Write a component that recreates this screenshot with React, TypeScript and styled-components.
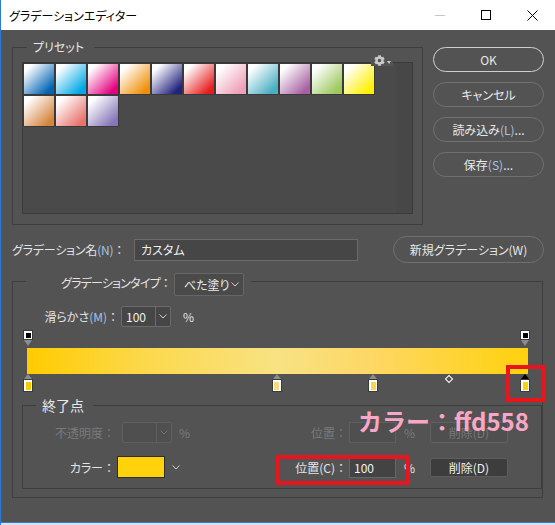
import React from "react";
import styled, { createGlobalStyle } from "styled-components";
import { FaCog } from "react-icons/fa";

const Global = createGlobalStyle`
  html, body { margin: 0; padding: 0; background: #535353; }
  * { box-sizing: border-box; }
`;

const Window = styled.div`
  position: relative;
  width: 555px;
  height: 525px;
  overflow: hidden;
  border-left: 1px solid #2d7ad6;
  display: flex;
  flex-direction: column;
  font-family: "Noto Sans CJK JP", "Noto Sans", sans-serif;
  font-feature-settings: "palt";
  font-size: 12px;
  color: #e4e4e4;
`;

const TitleBar = styled.div`
  height: 30px;
  flex: none;
  background: #ffffff;
  display: flex;
  align-items: center;
  padding-left: 8px;
  color: #000;
  font-size: 12px;
`;

const TitleText = styled.div`
  flex: 1;
`;

const WinButton = styled.div`
  width: 46px;
  height: 30px;
  display: flex;
  align-items: center;
  justify-content: center;
`;

const Body = styled.div`
  flex: 1;
  background: #535353;
  padding: 10px 11px 0 11px;
  display: flex;
  flex-direction: column;
`;

const BottomEdge = styled.div`
  height: 3px;
  flex: none;
  border-top: 1px solid #2d7ad6;
  background: #dde3ea;
`;

const TopRow = styled.div`
  display: flex;
  align-items: flex-start;
  gap: 10px;
`;

const Group = styled.fieldset<{ $w?: number; $pad: string; $mr?: number; $ml?: number; $mt?: number }>`
  position: relative;
  margin: ${(p) => p.$mt ?? 0}px ${(p) => p.$mr ?? 0}px 0 ${(p) => p.$ml ?? 0}px;
  padding: ${(p) => p.$pad};
  border: 1px solid #3e3e3e;
  min-width: 0;
  ${(p) => (p.$w ? `width: ${p.$w}px;` : "")}
`;

const Legend = styled.legend<{ $ml: number; $pl: number; $pr: number; $fs?: number }>`
  margin-left: ${(p) => p.$ml}px;
  padding: 0 ${(p) => p.$pr}px 0 ${(p) => p.$pl}px;
  font-size: ${(p) => p.$fs ?? 12}px;
  line-height: ${(p) => (p.$fs ?? 12) + 2}px;
  color: #e8e8e8;
`;

const TypeLegend = styled.legend`
  margin-left: 13px;
  padding: 0 7px 0 35px;
  height: 17px;
  display: flex;
  align-items: flex-start;
  gap: 2px;
`;

const LegendLabel = styled.span`
  line-height: 20px;
  color: #e4e4e4;
  letter-spacing: -0.8px;
  white-space: nowrap;
`;

const Colon = styled.span`
  font-feature-settings: normal;
  letter-spacing: 0;
`;

const GearBox = styled.div`
  position: absolute;
  top: 1px;
  right: 29px;
  display: flex;
  align-items: flex-end;
  gap: 2px;
  padding: 0 2px 0 3px;
  background: #535353;
  color: #c9c9c9;
`;

const TinyTriangle = styled.div`
  width: 0;
  height: 0;
  border-left: 2.5px solid transparent;
  border-right: 2.5px solid transparent;
  border-top: 3px solid #c9c9c9;
  margin-bottom: 2px;
`;

const PresetPanel = styled.div`
  height: 152px;
  background: #4a4a4a;
  border: 1px solid #3a3a3a;
  display: flex;
`;

const SwatchArea = styled.div`
  flex: 1;
  display: flex;
  flex-wrap: wrap;
  align-content: flex-start;
`;

const ScrollStrip = styled.div`
  width: 16px;
  background: #474747;
`;

const Swatch = styled.div<{ $c: string }>`
  width: 32px;
  height: 32px;
  border: 1px solid #3a3a3a;
  background: linear-gradient(135deg, #ffffff 14%, ${(p) => p.$c} 86%);
`;

const ButtonColumn = styled.div`
  margin-top: 7px;
  width: 111px;
  display: flex;
  flex-direction: column;
  gap: 10px;
`;

const PillButton = styled.button<{ $primary?: boolean; $h?: number }>`
  height: ${(p) => p.$h ?? 25}px;
  border-radius: 14px;
  border: 1.5px solid ${(p) => (p.$primary ? "#cfcfcf" : "#707070")};
  background: transparent;
  color: #e8e8e8;
  font-family: inherit;
  font-feature-settings: "palt";
  font-size: 12px;
  padding: 0;
  display: flex;
  align-items: center;
  justify-content: center;
`;

const Mn = styled.span`
  color: #a9c2e2;
`;

const NameRow = styled.div`
  margin-top: 11px;
  height: 27px;
  display: flex;
  align-items: center;
`;

const NameLabel = styled.div`
  width: 122px;
  white-space: nowrap;
  letter-spacing: -0.2px;
`;

const TextBox = styled.div<{ $w: number; $h: number; $bg?: string }>`
  width: ${(p) => p.$w}px;
  height: ${(p) => p.$h}px;
  background: ${(p) => p.$bg ?? "#464646"};
  border: 1px solid #6b6b6b;
  display: flex;
  align-items: center;
  padding-left: 6px;
  color: #f0f0f0;
`;

const NewButton = styled(PillButton)`
  margin-left: auto;
  width: 151px;
`;

const SelectBox = styled.div`
  width: 70px;
  height: 23px;
  border: 1px solid #666;
  border-radius: 2px;
  background: #4a4a4a;
  display: flex;
  align-items: center;
  justify-content: space-between;
  padding: 0 4px 0 9px;
  color: #ececec;
`;

const SmoothRow = styled.div`
  margin-top: 16px;
  height: 21px;
  display: flex;
  align-items: center;
`;

const RightLabel = styled.div<{ $w: number; $muted?: boolean }>`
  width: ${(p) => p.$w}px;
  text-align: right;
  padding-right: 2px;
  color: ${(p) => (p.$muted ? "#7a7a7a" : "#e4e4e4")};
  white-space: nowrap;
`;

const SpinBox = styled.div<{ $muted?: boolean; $ml?: number }>`
  margin-left: ${(p) => p.$ml ?? 0}px;
  width: 50px;
  height: 21px;
  border: 1px solid ${(p) => (p.$muted ? "#5f5f5f" : "#6b6b6b")};
  border-radius: 2px;
  background: ${(p) => (p.$muted ? "#4f4f4f" : "#464646")};
  display: flex;
  color: #f0f0f0;
`;

const SpinValue = styled.div<{ $muted?: boolean }>`
  width: 34px;
  border-right: 1px solid ${(p) => (p.$muted ? "#5f5f5f" : "#6b6b6b")};
  display: flex;
  align-items: center;
  padding-left: 4px;
`;

const SpinArrow = styled.div`
  flex: 1;
  display: flex;
  align-items: center;
  justify-content: center;
`;

const Percent = styled.div<{ $ml: number; $muted?: boolean }>`
  margin-left: ${(p) => p.$ml}px;
  color: ${(p) => (p.$muted ? "#7a7a7a" : "#e4e4e4")};
`;

const Editor = styled.div`
  margin: 3px 0 0 10px;
  width: 509px;
`;

const StopTrack = styled.div<{ $h: number }>`
  position: relative;
  height: ${(p) => p.$h}px;
`;

const Bar = styled.div`
  margin: 1px 4px 0 4px;
  height: 26px;
  background: linear-gradient(90deg, #ffcb00 0%, #fcd848 22%, #f8e283 50%, #fed764 69%, #ffd10c 100%);
`;

const Stop = styled.div`
  position: absolute;
  top: 0;
  width: 10px;
  margin-left: -5px;
  display: flex;
  flex-direction: column;
  align-items: center;
`;

const TriUp = styled.div<{ $dark?: boolean }>`
  width: 0;
  height: 0;
  border-left: 4.5px solid transparent;
  border-right: 4.5px solid transparent;
  border-bottom: 5px solid ${(p) => (p.$dark ? "#000" : "#8c8c8c")};
`;

const TriDown = styled.div`
  width: 0;
  height: 0;
  border-left: 4.5px solid transparent;
  border-right: 4.5px solid transparent;
  border-top: 6px solid #8c8c8c;
`;

const StopSquare = styled.div<{ $c: string; $h: number }>`
  width: 10px;
  height: ${(p) => p.$h}px;
  background: #fff;
  border: 1px solid #3a3a3a;
  padding: 1.5px;
  &::after {
    content: "";
    display: block;
    width: 100%;
    height: 100%;
    background: ${(p) => p.$c};
  }
`;

const Diamond = styled.div`
  position: absolute;
  top: 2px;
  width: 6px;
  height: 6px;
  margin-left: -3px;
  border: 1px solid #fff;
  transform: rotate(45deg);
`;

const EndRow = styled.div<{ $mt: number; $h: number }>`
  margin-top: ${(p) => p.$mt}px;
  height: ${(p) => p.$h}px;
  display: grid;
  grid-template-columns: 94px 55px 30px 147px 47px 34px 78px;
  align-items: center;
`;

const Cell = styled.div<{ $pl?: number }>`
  padding-left: ${(p) => p.$pl ?? 0}px;
  display: flex;
  align-items: center;
`;

const ColorSwatch = styled.div`
  width: 48px;
  height: 22px;
  background: #ffd20c;
  border: 1px solid #2e2e2e;
`;

const PosBox = styled.div<{ $muted?: boolean }>`
  width: 47px;
  height: 21px;
  border: 1px solid ${(p) => (p.$muted ? "#5f5f5f" : "#666")};
  background: ${(p) => (p.$muted ? "#4f4f4f" : "#434343")};
  display: flex;
  align-items: center;
  padding-left: 4px;
  color: #f4f4f4;
`;

const DeleteButton = styled.button<{ $muted?: boolean }>`
  width: 78px;
  height: ${(p) => (p.$muted ? 21 : 19)}px;
  border-radius: 2px;
  border: 1px solid ${(p) => (p.$muted ? "#626262" : "#5d5d5d")};
  background: ${(p) => (p.$muted ? "#4f4f4f" : "#3d3d3d")};
  color: ${(p) => (p.$muted ? "#777" : "#f0f0f0")};
  font-family: inherit;
  font-feature-settings: "palt";
  font-size: 12px;
  padding: 0;
`;

const RedBox = styled.div<{ $x: number; $y: number; $w: number; $h: number }>`
  position: absolute;
  left: ${(p) => p.$x}px;
  top: ${(p) => p.$y}px;
  width: ${(p) => p.$w}px;
  height: ${(p) => p.$h}px;
  border: 4px solid #e8141e;
  pointer-events: none;
`;

const Annotation = styled.div`
  position: absolute;
  left: 357px;
  top: 404px;
  font-family: "Noto Sans CJK JP", sans-serif;
  font-feature-settings: normal;
  font-weight: 700;
  font-size: 24px;
  line-height: 34px;
  color: #f9a7c7;
  white-space: nowrap;
`;

const Chevron = ({ color = "#cfcfcf" }: { color?: string }) => (
  <svg width="8" height="5" viewBox="0 0 8 5">
    <polyline points="0.5,0.5 4,4 7.5,0.5" fill="none" stroke={color} strokeWidth="1" />
  </svg>
);

const presets = [
  "#0064b4", "#00a8e6", "#e4007f", "#f0900a", "#21217f", "#e61e1e",
  "#eea0b8", "#48aec2", "#a860a2", "#9cc85c", "#fff000",
  "#d4853c", "#e8746c", "#8676b8",
];

const colorStops = [
  { p: 0, c: "#ffc800" },
  { p: 50, c: "#f8dc7c" },
  { p: 69.5, c: "#ffd34a" },
  { p: 100, c: "#ffd10c", sel: true },
];

const stopLeft = (p: number) => 5 + (p * 497) / 100;

export default function App() {
  return (
    <>
      <Global />
      <Window>
        <TitleBar>
          <TitleText>グラデーションエディター</TitleText>
          <WinButton>
            <svg width="10" height="10" viewBox="0 0 10 10">
              <line x1="0" y1="5.5" x2="10" y2="5.5" stroke="#c4c4c4" strokeWidth="1" />
            </svg>
          </WinButton>
          <WinButton>
            <svg width="10" height="10" viewBox="0 0 10 10">
              <rect x="0.5" y="0.5" width="9" height="9" fill="none" stroke="#000" strokeWidth="1" />
            </svg>
          </WinButton>
          <WinButton>
            <svg width="11" height="11" viewBox="0 0 11 11">
              <line x1="0.5" y1="0.5" x2="10.5" y2="10.5" stroke="#000" strokeWidth="1" />
              <line x1="10.5" y1="0.5" x2="0.5" y2="10.5" stroke="#000" strokeWidth="1" />
            </svg>
          </WinButton>
        </TitleBar>

        <Body>
          <TopRow>
            <Group $w={411} $pad="8px 9px 10px 9px">
              <Legend $ml={5} $pl={6} $pr={10}>プリセット</Legend>
              <GearBox>
                <FaCog size={11} />
                <TinyTriangle />
              </GearBox>
              <PresetPanel>
                <SwatchArea>
                  {presets.map((c, i) => (
                    <Swatch key={i} $c={c} />
                  ))}
                </SwatchArea>
                <ScrollStrip />
              </PresetPanel>
            </Group>
            <ButtonColumn>
              <PillButton $primary>OK</PillButton>
              <PillButton>キャンセル</PillButton>
              <PillButton>
                読み込み<Mn>(L)</Mn>...
              </PillButton>
              <PillButton>
                保存<Mn>(S)</Mn>...
              </PillButton>
            </ButtonColumn>
          </TopRow>

          <NameRow>
            <NameLabel>
              グラデーション名<Mn>(N)</Mn>
              <Colon>：</Colon>
            </NameLabel>
            <TextBox $w={224} $h={22}>カスタム</TextBox>
            <NewButton $h={27}>新規グラデーション(W)</NewButton>
          </NameRow>

          <Group $pad="0 0 8px 0" $mt={10} $mr={1}>
            <TypeLegend>
              <LegendLabel>
                グラデーションタイプ<Colon>：</Colon>
              </LegendLabel>
              <SelectBox>
                べた塗り
                <Chevron />
              </SelectBox>
            </TypeLegend>

            <SmoothRow>
              <RightLabel $w={108}>
                滑らかさ<Mn>(M)</Mn>
                <Colon>：</Colon>
              </RightLabel>
              <SpinBox>
                <SpinValue>100</SpinValue>
                <SpinArrow>
                  <Chevron />
                </SpinArrow>
              </SpinBox>
              <Percent $ml={12}>%</Percent>
            </SmoothRow>

            <Editor>
              <StopTrack $h={17}>
                {[0, 100].map((p) => (
                  <Stop key={p} style={{ left: stopLeft(p) }}>
                    <StopSquare $c="#000" $h={10} />
                    <TriDown />
                  </Stop>
                ))}
              </StopTrack>
              <Bar />
              <StopTrack $h={19}>
                {colorStops.map((s) => (
                  <Stop key={s.p} style={{ left: stopLeft(s.p) }}>
                    <TriUp $dark={s.sel} />
                    <StopSquare $c={s.c} $h={13} />
                  </Stop>
                ))}
                <Diamond style={{ left: stopLeft(84.75) }} />
              </StopTrack>
            </Editor>

            <Group $pad="0 0 10px 0" $mt={4} $ml={9} $mr={0}>
              <Legend $ml={13} $pl={6} $pr={9} $fs={14}>
                終了点
              </Legend>
              <EndRow $mt={9} $h={21}>
                <RightLabel $w={94} $muted>
                  不透明度<Colon>：</Colon>
                </RightLabel>
                <Cell>
                  <SpinBox $muted $ml={5}>
                    <SpinValue $muted />
                    <SpinArrow>
                      <Chevron color="#707070" />
                    </SpinArrow>
                  </SpinBox>
                </Cell>
                <Cell $pl={7}>
                  <Percent $ml={0} $muted>
                    %
                  </Percent>
                </Cell>
                <RightLabel $w={147} $muted>
                  位置<Colon>：</Colon>
                </RightLabel>
                <PosBox $muted />
                <Cell $pl={8}>
                  <Percent $ml={0} $muted>
                    %
                  </Percent>
                </Cell>
                <DeleteButton $muted>削除(D)</DeleteButton>
              </EndRow>
              <EndRow $mt={13} $h={22}>
                <RightLabel $w={94}>
                  カラー<Colon>：</Colon>
                </RightLabel>
                <Cell>
                  <ColorSwatch />
                </Cell>
                <Cell $pl={0}>
                  <Chevron />
                </Cell>
                <RightLabel $w={147}>
                  位置(C)<Colon>：</Colon>
                </RightLabel>
                <PosBox>100</PosBox>
                <Cell $pl={8}>
                  <Percent $ml={0}>%</Percent>
                </Cell>
                <DeleteButton>削除(D)</DeleteButton>
              </EndRow>
            </Group>
          </Group>
        </Body>
        <BottomEdge />

        <RedBox $x={505} $y={365} $w={39} $h={37} />
        <RedBox $x={275} $y={455} $w={134} $h={30} />
        <Annotation>カラー：ffd558</Annotation>
      </Window>
    </>
  );
}
